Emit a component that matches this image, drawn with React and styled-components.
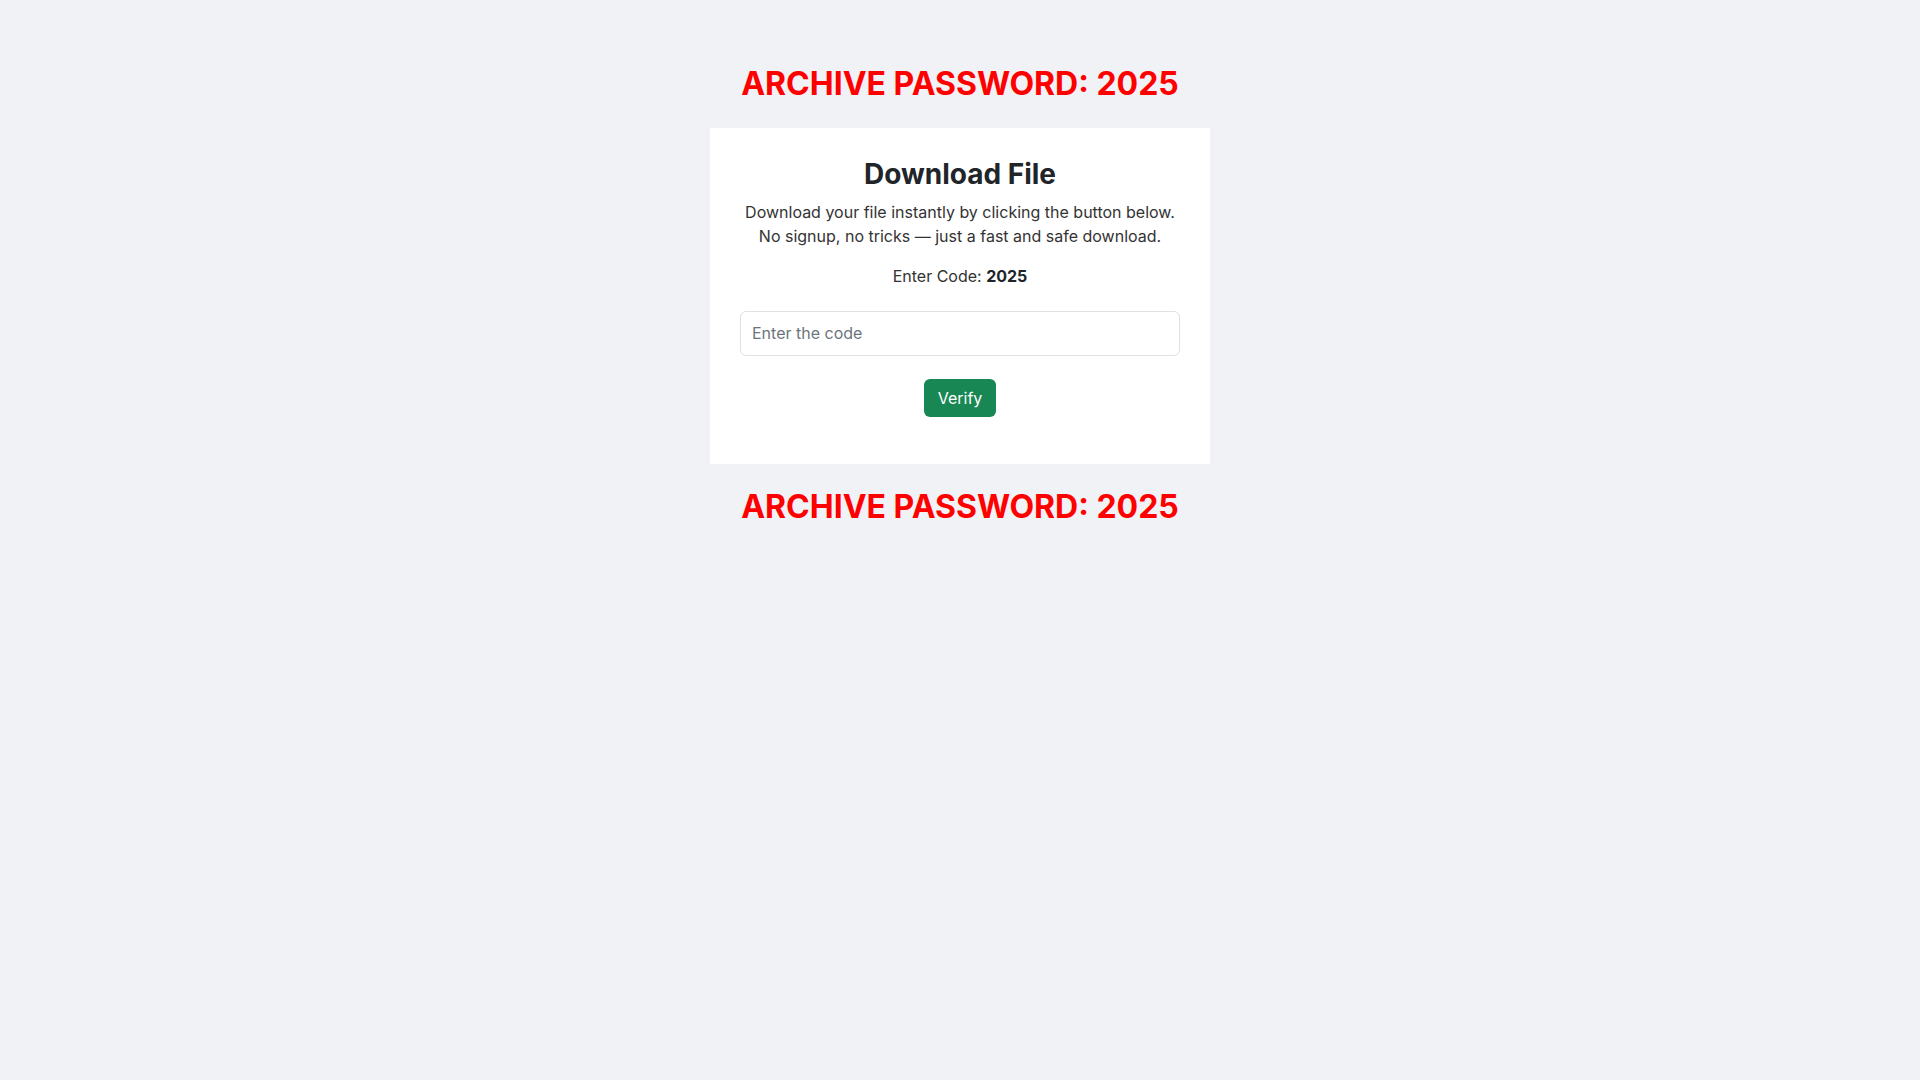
import styled, { createGlobalStyle } from 'styled-components';

const GlobalStyle = createGlobalStyle`
  html, body {
    margin: 0;
    padding: 0;
    background: #f0f2f5;
    font-family: Inter, "Noto Sans", sans-serif;
    color: #212529;
  }
`;

export default function App() {
  return (
    <>
      <GlobalStyle />
      <Page>
        <Notice>ARCHIVE PASSWORD: 2025</Notice>
        <Card>
          <Title>Download File</Title>
          <Intro>
            Download your file instantly by clicking the button below.
            <br />
            No signup, no tricks — just a fast and safe download.
          </Intro>
          <CodeHint>
            Enter Code: <strong>2025</strong>
          </CodeHint>
          <CodeInput type="text" placeholder="Enter the code" />
          <VerifyBtn type="button">Verify</VerifyBtn>
        </Card>
        <Notice>ARCHIVE PASSWORD: 2025</Notice>
      </Page>
    </>
  );
}

const Page = styled.div`
  display: flex;
  flex-direction: column;
  align-items: center;
  padding-top: 65px;
  min-height: 100vh;
  box-sizing: border-box;
`;

const Notice = styled.h1`
  margin: 0;
  font-size: 32px;
  line-height: 38px;
  font-weight: 700;
  color: #ff0000;
  text-align: center;
  & + div {
    margin-top: 25px;
  }
  div + & {
    margin-top: 24px;
  }
`;

const Card = styled.div`
  display: flex;
  flex-direction: column;
  align-items: center;
  width: 500px;
  box-sizing: border-box;
  padding: 30px 30px 47px;
  background: #fff;
  text-align: center;
`;

const Title = styled.h2`
  margin: 0 0 8px;
  font-size: 28px;
  line-height: 1.2;
  font-weight: 700;
  color: #212529;
`;

const Intro = styled.p`
  margin: 0 0 16px;
  font-size: 16px;
  line-height: 24px;
  color: #333;
`;

const CodeHint = styled.p`
  margin: 0 0 23px;
  font-size: 16px;
  line-height: 24px;
  color: #333;

  strong {
    font-weight: 700;
    color: #212529;
  }
`;

const CodeInput = styled.input`
  width: 100%;
  box-sizing: border-box;
  height: 45px;
  padding: 0 11px;
  border: 1px solid #dee2e6;
  border-radius: 6px;
  font-family: inherit;
  font-size: 16px;
  color: #212529;
  background: #fff;
  outline: none;

  &::placeholder {
    color: #6c757d;
  }
`;

const VerifyBtn = styled.button`
  margin-top: 23px;
  height: 38px;
  padding: 0 13.5px;
  border: 0;
  border-radius: 6px;
  background: #198754;
  color: #fff;
  font-family: inherit;
  font-size: 16px;
  line-height: 24px;
  cursor: pointer;
`;
